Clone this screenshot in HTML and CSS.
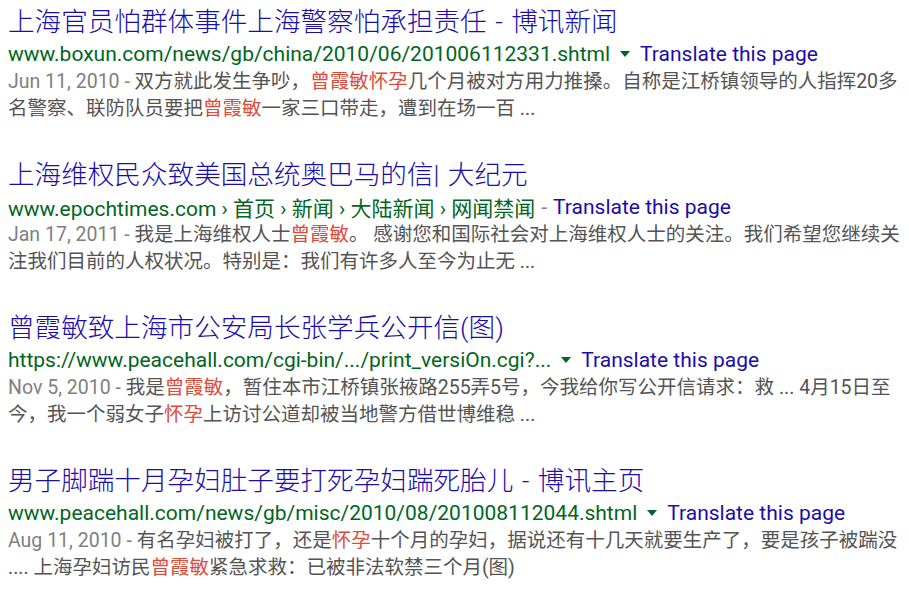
FILE: index.html
```html
<!DOCTYPE html>
<html lang="zh-CN">
<head>
    <meta charset="UTF-8">
    <meta name="viewport" content="width=device-width, initial-scale=1.0">
    <title>曾霞敏 - Search results</title>
    <link rel="stylesheet" href="styles.css">
</head>
<body>
    <div class="results">
        <div class="result">
            <h3 class="title"><a href="#">上海官员怕群体事件上海警察怕承担责任 - 博讯新闻</a></h3>
            <div class="url-line">
                <cite class="url">www.boxun.com/news/gb/china/2010/06/201006112331.shtml</cite>
                <span class="arrow"></span>
                <a class="translate" href="#">Translate this page</a>
            </div>
            <p class="snippet"><span class="date">Jun 11, 2010 -</span> 双方就此发生争吵，<em>曾霞敏怀孕</em>几个月被对方用力推搡。自称是江桥镇领导的人指挥20多名警察、联防队员要把<em>曾霞敏</em>一家三口带走，遭到在场一百 ...</p>
        </div>

        <div class="result">
            <h3 class="title"><a href="#">上海维权民众致美国总统奥巴马的信| 大纪元</a></h3>
            <div class="url-line tight">
                <cite class="url">www.epochtimes.com › 首页 › 新闻 › 大陆新闻 › 网闻禁闻</cite>
                <span class="dash">-</span>
                <a class="translate" href="#">Translate this page</a>
            </div>
            <p class="snippet"><span class="date">Jan 17, 2011 -</span> 我是上海维权人士<em>曾霞敏</em>。 感谢您和国际社会对上海维权人士的关注。我们希望您继续关注我们目前的人权状况。特别是：我们有许多人至今为止无 ...</p>
        </div>

        <div class="result">
            <h3 class="title"><a href="#">曾霞敏致上海市公安局长张学兵公开信(图)</a></h3>
            <div class="url-line">
                <cite class="url">https://www.peacehall.com/cgi-bin/.../print_versiOn.cgi?...</cite>
                <span class="arrow"></span>
                <a class="translate" href="#">Translate this page</a>
            </div>
            <p class="snippet"><span class="date">Nov 5, 2010 -</span> 我是<em>曾霞敏</em>，暂住本市江桥镇张掖路255弄5号，今我给你写公开信请求：救 ... 4月15日至今，我一个弱女子<em>怀孕</em>上访讨公道却被当地警方借世博维稳 ...</p>
        </div>

        <div class="result">
            <h3 class="title"><a href="#">男子脚踹十月孕妇肚子要打死孕妇踹死胎儿 - 博讯主页</a></h3>
            <div class="url-line">
                <cite class="url">www.peacehall.com/news/gb/misc/2010/08/201008112044.shtml</cite>
                <span class="arrow"></span>
                <a class="translate" href="#">Translate this page</a>
            </div>
            <p class="snippet"><span class="date">Aug 11, 2010 -</span> 有名孕妇被打了，还是<em>怀孕</em>十个月的孕妇，据说还有十几天就要生产了，要是孩子被踹没 .... 上海孕妇访民<em>曾霞敏</em>紧急求救：已被非法软禁三个月(图)</p>
        </div>
    </div>
</body>
</html>
```

FILE: styles.css
```css
body {
    margin: 0;
    background: #fff;
    font-family: Roboto, "Noto Sans CJK SC", sans-serif;
}

.results {
    display: flex;
    flex-direction: column;
    gap: 35px;
    padding: 4px 0 0 8px;
    width: 895px;
}

.title {
    margin: 0;
    font-size: 26.6px;
    font-weight: 300;
    line-height: 36px;
    word-spacing: 2px;
}

.title a {
    color: #1a0dab;
    text-decoration: none;
}

.url-line {
    display: flex;
    align-items: center;
    gap: 9px;
    height: 28px;
    font-size: 21px;
}

.url-line.tight {
    gap: 6px;
}

.url {
    font-style: normal;
    color: #006621;
}

.arrow {
    width: 0;
    height: 0;
    margin: 0 1px;
    border-left: 5px solid transparent;
    border-right: 5px solid transparent;
    border-top: 6px solid #006621;
}

.dash {
    color: #808080;
}

.translate {
    color: #1a0dab;
    text-decoration: none;
}

.snippet {
    margin: 0;
    font-size: 19.5px;
    line-height: 27px;
    color: #545454;
}

.date {
    color: #808080;
}

.snippet em {
    font-style: normal;
    color: #dd4b39;
}
```
